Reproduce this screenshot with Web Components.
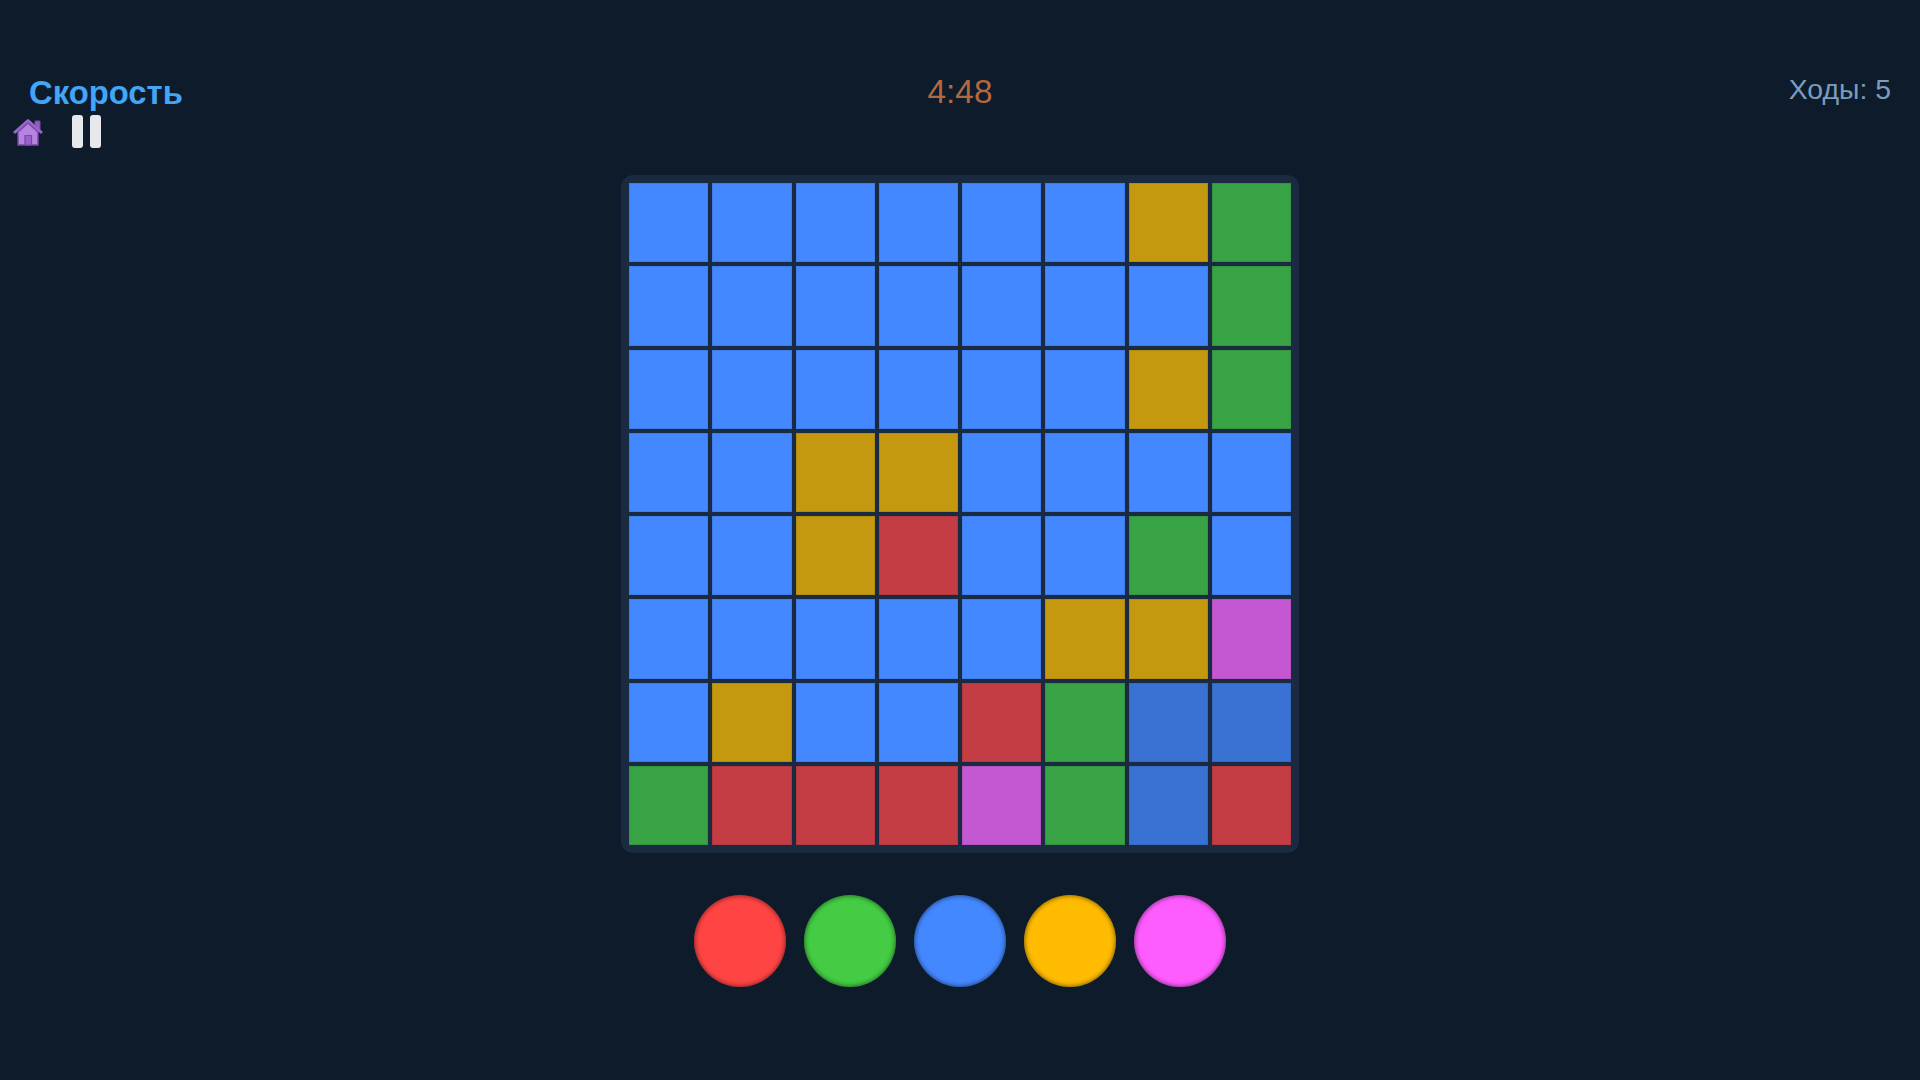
<!DOCTYPE html>
<html lang="ru">
<head>
<meta charset="utf-8">
<title>Скорость</title>
<style>
    html, body {
        margin: 0;
        height: 100%;
        background: #0d1b2a;
        font-family: "Liberation Sans", Arial, sans-serif;
    }
</style>
</head>
<body>
<game-screen>
    <game-header slot="header" title-text="Скорость" time="4:48" moves="Ходы: 5"></game-header>
    <game-board slot="board"></game-board>
    <color-picker slot="picker"></color-picker>
</game-screen>

<script>
customElements.define('game-screen', class extends HTMLElement {
    connectedCallback() {
        this.attachShadow({ mode: "open" });
        this.shadowRoot.innerHTML = `
            <style>
                :host {
                    display: flex;
                    flex-direction: column;
                    align-items: center;
                    width: 1920px;
                    height: 1080px;
                    padding-top: 73px;
                    box-sizing: border-box;
                }
                ::slotted([slot="board"]) {
                    margin-top: 20px;
                }
                ::slotted([slot="picker"]) {
                    margin-top: 42px;
                }
            </style>
            <slot name="header"></slot>
            <slot name="board"></slot>
            <slot name="picker"></slot>
        `
    }
})

customElements.define('game-header', class extends HTMLElement {
    connectedCallback() {
        this.attachShadow({ mode: "open" });
        this.shadowRoot.innerHTML = `
            <style>
                :host {
                    display: grid;
                    grid-template-columns: minmax(0, 1fr) auto minmax(0, 1fr);
                    width: 100%;
                    height: 82px;
                    box-sizing: border-box;
                }
                .title {
                    margin-top: 1px;
                    font-size: 32.8px;
                    line-height: 38px;
                    font-weight: 700;
                    color: #42a5f5;
                    padding-left: 29px;
                }
                .tools {
                    display: flex;
                    align-items: center;
                    gap: 28px;
                    padding-left: 12px;
                    margin-top: 1px;
                    height: 37px;
                }
                .tools svg {
                    display: block;
                    width: 32px;
                    height: 30px;
                }
                .pause {
                    display: flex;
                    gap: 7px;
                    height: 33px;
                }
                .pause i {
                    display: block;
                    width: 11px;
                    background: #e6e8eb;
                    border-radius: 3px;
                }
                .time {
                    font-size: 33.3px;
                    line-height: 38px;
                    color: #b5683f;
                }
                .moves {
                    justify-self: end;
                    font-size: 28.4px;
                    line-height: 33px;
                    color: #7a9cc0;
                    padding-right: 29px;
                }
            </style>
            <div class="left">
                <div class="title">${this.getAttribute('title-text')}</div>
                <div class="tools">
                    <svg viewBox="0 0 32 30">
                        <path d="M23 4h5v10h-5z" fill="#8f5fc4" stroke="#7b46a8" stroke-width="1"/>
                        <path d="M6 15 16 6 26 15V28H6z" fill="#b583e0" stroke="#7b46a8" stroke-width="1.500" stroke-linejoin="round"/>
                        <path d="M2 16 16 3.500 30 16" fill="none" stroke="#9a63cc" stroke-width="3" stroke-linejoin="round"/>
                        <path d="M13 28V18.500h6.500V28z" fill="#9a63cc" stroke="#7b46a8" stroke-width="1.200"/>
                    </svg>
                    <div class="pause"><i></i><i></i></div>
                </div>
            </div>
            <div class="time">${this.getAttribute('time')}</div>
            <div class="moves">${this.getAttribute('moves')}</div>
        `
    }
})

customElements.define('game-board', class extends HTMLElement {
    connectedCallback() {
        // b blue, B dimmed blue, y gold, g green, r red, p purple
        const rows = [
            'bbbbbbyg',
            'bbbbbbbg',
            'bbbbbbyg',
            'bbyybbbb',
            'bbyrbbgb',
            'bbbbbyyp',
            'bybbrgBB',
            'grrrpgBr'
        ];
        const cells = rows.join('').split('').map(c => `<div class="cell ${c === 'B' ? 'dim' : c}"></div>`).join('');
        this.attachShadow({ mode: "open" });
        this.shadowRoot.innerHTML = `
            <style>
                :host {
                    display: grid;
                    grid-template-columns: repeat(8, 1fr);
                    grid-auto-rows: 1fr;
                    gap: 4px;
                    width: 678px;
                    height: 678px;
                    padding: 8px;
                    box-sizing: border-box;
                    background: #1a2a40;
                    border-radius: 12px;
                }
                .cell { border: 1px solid rgba(0, 0, 0, 0.08); }
                .b { background: #4488ff; }
                .dim { background: #3a72d4; }
                .y { background: #c4980f; }
                .g { background: #38a345; }
                .r { background: #c43c44; }
                .p { background: #c457d2; }
            </style>
            ${cells}
        `
    }
})

customElements.define('color-picker', class extends HTMLElement {
    connectedCallback() {
        const colors = ['#ff4444', '#44cc44', '#4488ff', '#ffbb00', '#ff5cff'];
        this.attachShadow({ mode: "open" });
        this.shadowRoot.innerHTML = `
            <style>
                :host {
                    display: flex;
                    gap: 18px;
                }
                button {
                    width: 92px;
                    height: 92px;
                    padding: 0;
                    border: 0;
                    border-radius: 50%;
                    box-shadow: inset 0 0 4px 1px rgba(0, 0, 0, 0.45);
                }
            </style>
            ${colors.map(c => `<button style="background-color:${c}"></button>`).join('')}
        `
    }
})
</script>
</body>
</html>
